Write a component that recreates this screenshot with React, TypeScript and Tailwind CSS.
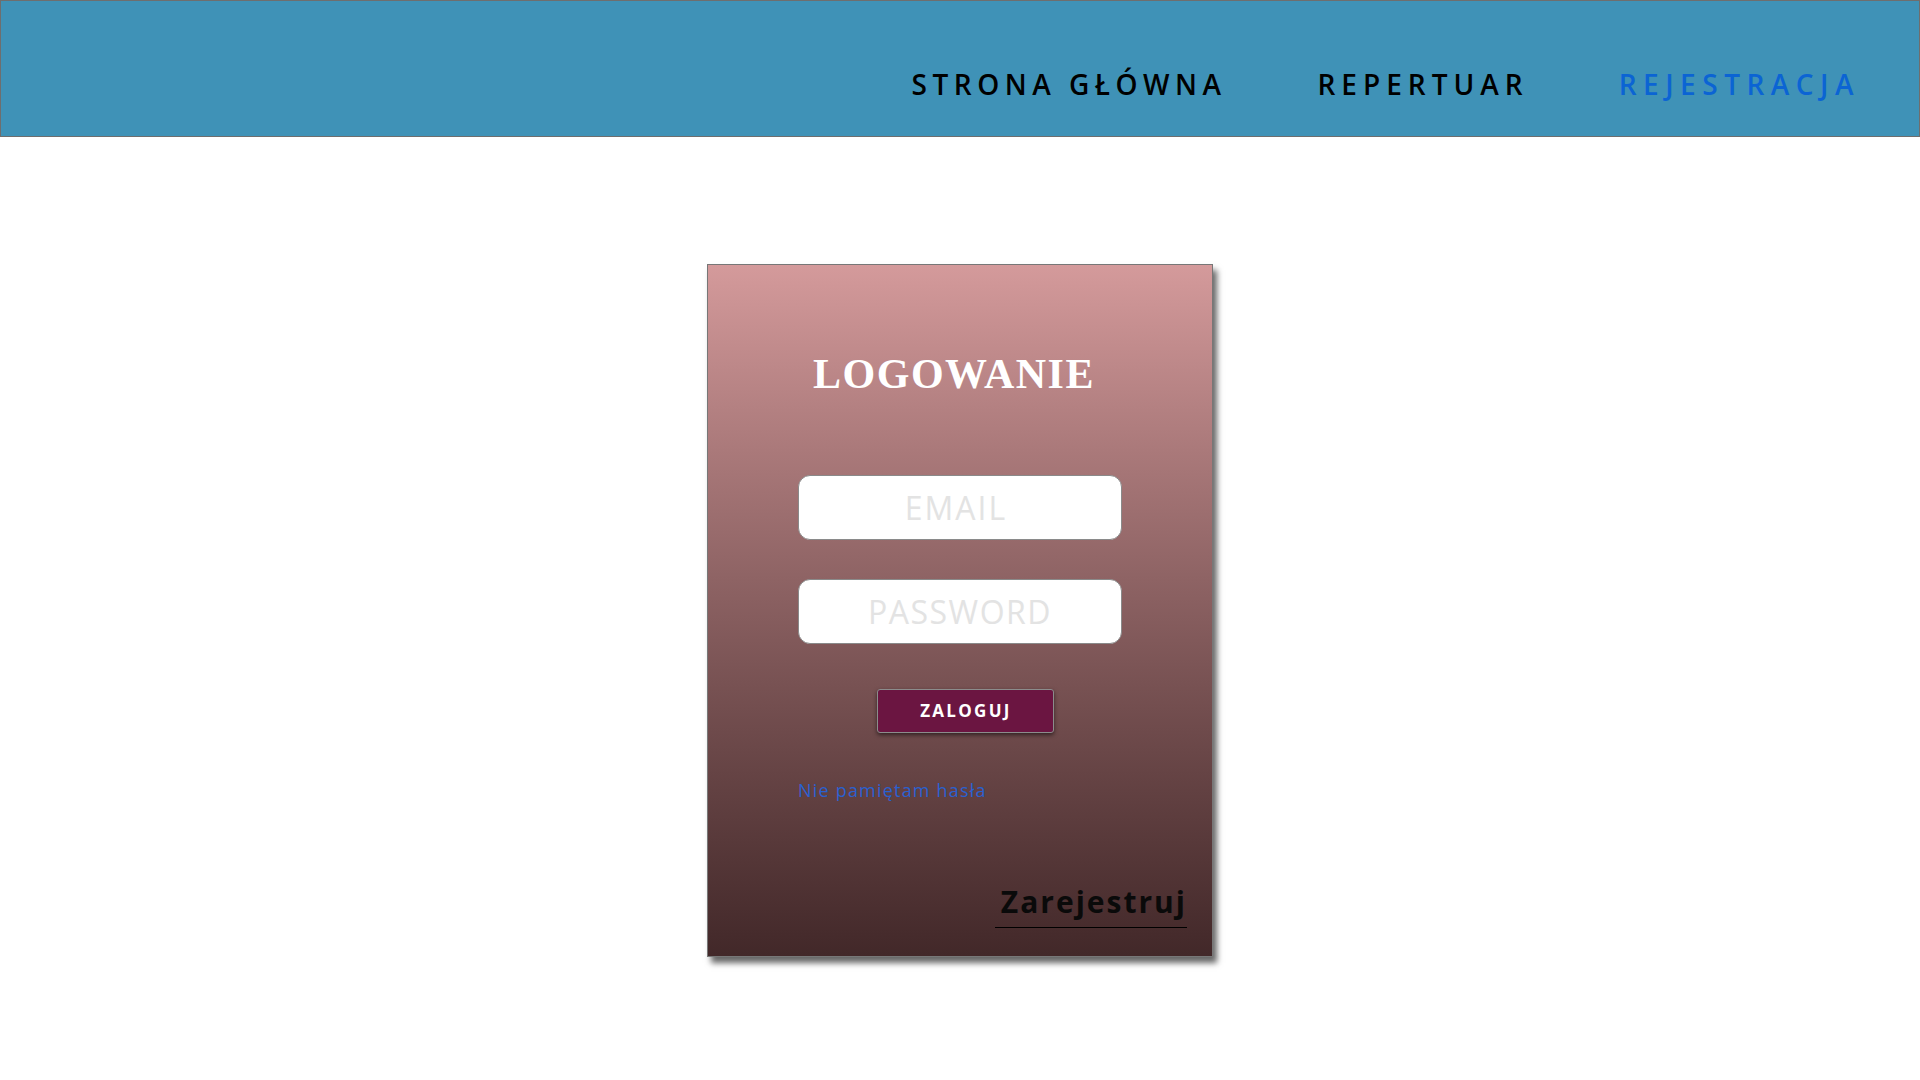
import React from "react";

export default function App() {
  return (
    <div className="min-h-screen w-full bg-white" style={{ fontFamily: '"Open Sans", "Noto Sans", sans-serif' }}>
      <header className="h-[137px] w-full border border-[#6e6e6e] bg-[#3f92b7]">
        <nav className="flex justify-end pr-[59px] pt-[64px]">
          <a className="mr-[91px] text-[28px] font-semibold leading-[38px] tracking-[5.5px] text-black">STRONA GŁÓWNA</a>
          <a className="mr-[90px] text-[28px] font-semibold leading-[38px] tracking-[6px] text-black">REPERTUAR</a>
          <a className="text-[28px] font-semibold leading-[38px] tracking-[6.5px] text-[#0b64d4]">REJESTRACJA</a>
        </nav>
      </header>

      <main className="flex justify-center pt-[127px]">
        <div className="flex h-[693px] w-[506px] flex-col border border-[#777777] bg-gradient-to-b from-[#d49a9b] to-[#422829] shadow-[4px_6px_6px_rgba(0,0,0,0.6)]">
          <h1
            className="pr-[12px] pt-[85px] text-center text-[42px] font-bold leading-[48px] tracking-[1.5px] text-white"
            style={{ fontFamily: '"Liberation Serif", "DejaVu Serif", serif' }}
          >
            LOGOWANIE
          </h1>

          <div className="mx-auto mt-[77px] flex h-[65px] w-[324px] items-center justify-center rounded-[12px] border border-[#8a8a8a] bg-white">
            <span className="pr-[8px] text-[32px] leading-[40px] tracking-[2px] text-[#e3e3e3]">EMAIL</span>
          </div>

          <div className="mx-auto mt-[39px] flex h-[65px] w-[324px] items-center justify-center rounded-[12px] border border-[#8a8a8a] bg-white">
            <span className="text-[32px] leading-[40px] tracking-[1.5px] text-[#e3e3e3]">PASSWORD</span>
          </div>

          <div className="mt-[45px] flex justify-center pl-[10px]">
            <button className="flex h-[44px] w-[177px] items-center justify-center rounded-[3px] border border-[#8c8c8c] bg-[#6b1541] shadow-[0_2px_4px_rgba(0,0,0,0.55)]">
              <span className="pl-[2px] text-[17px] font-bold leading-[24px] tracking-[2.3px] text-white">ZALOGUJ</span>
            </button>
          </div>

          <div className="mt-[45px] pl-[90px]">
            <a className="text-[18px] leading-[24px] tracking-[1.2px] text-[#2a60d0]">Nie pamiętam hasła</a>
          </div>

          <div className="mt-[79px] flex justify-end pr-[25px]">
            <a className="border-b border-black pb-[5px] pl-[6px] text-[30px] font-bold leading-[40px] tracking-[2px] text-[#0a0a0a]">
              Zarejestruj
            </a>
          </div>
        </div>
      </main>
    </div>
  );
}
